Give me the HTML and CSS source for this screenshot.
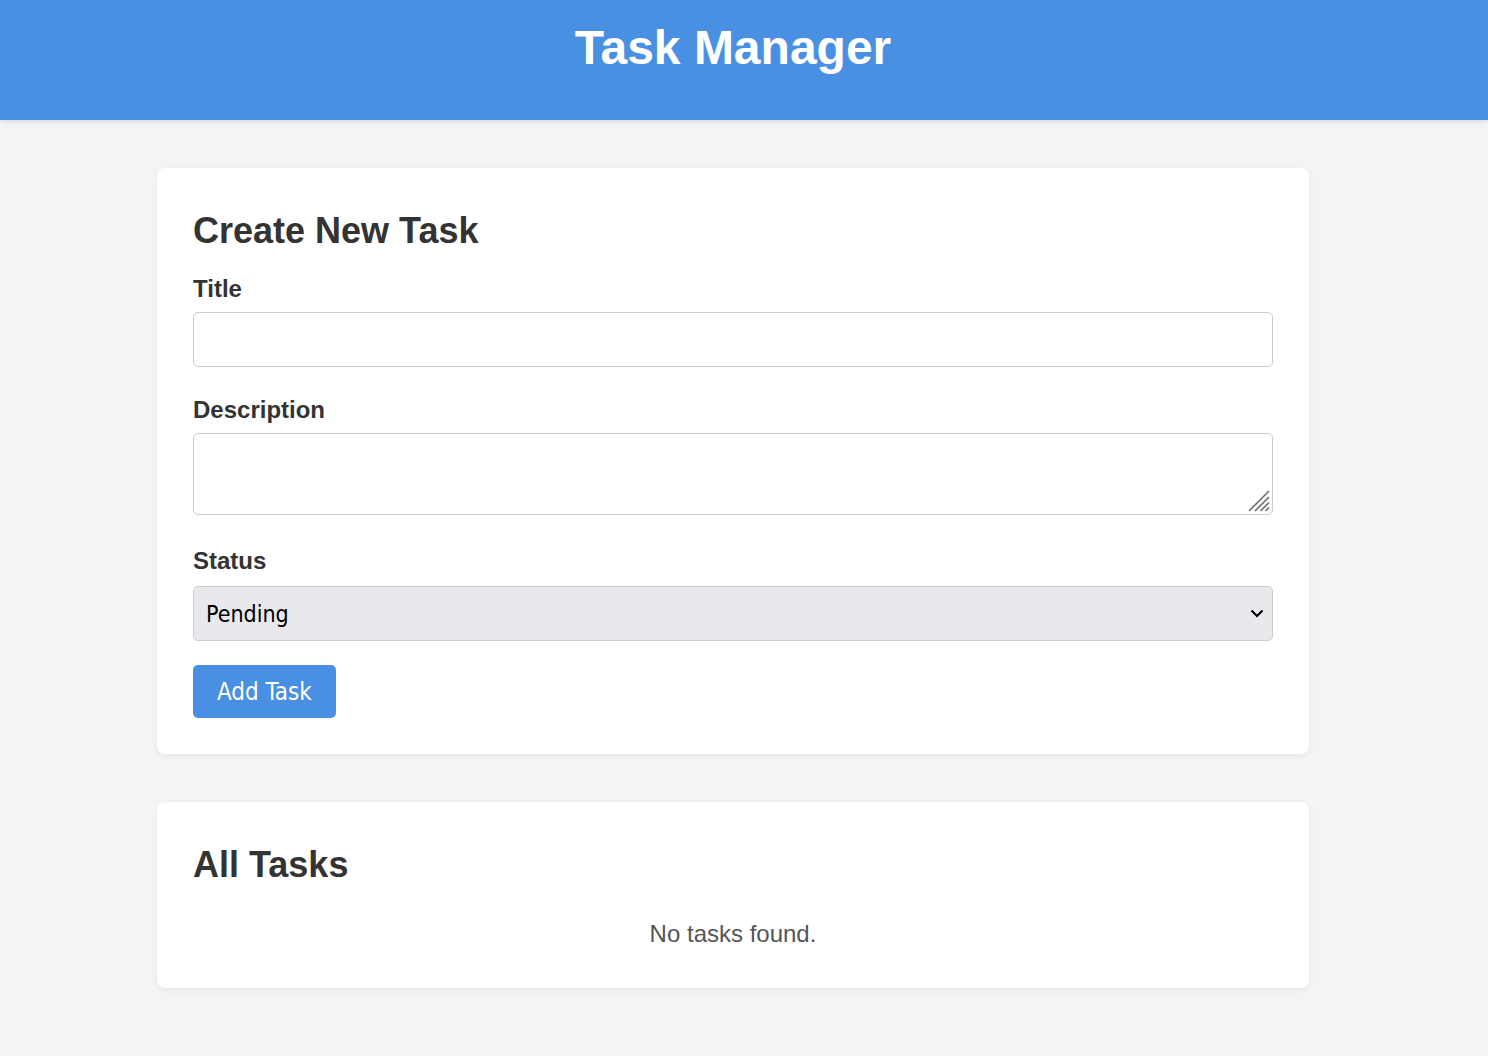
FILE: index.html
```html
<!DOCTYPE html>
<html lang="en">
<head>
<meta charset="utf-8">
<title>Task Manager</title>
<link rel="stylesheet" href="styles.css">
</head>
<body>
<header class="app-header">
  <h1 class="app-title">Task Manager</h1>
</header>
<main class="container">
  <section class="card">
    <h2 class="card-title">Create New Task</h2>
    <form class="task-form">
      <div class="form-group">
        <label class="form-label" for="title">Title</label>
        <input class="form-control" id="title" type="text">
      </div>
      <div class="form-group form-group-area">
        <label class="form-label" for="desc">Description</label>
        <div class="area-wrap">
          <textarea class="form-control form-textarea" id="desc"></textarea>
          <svg class="grip" width="22" height="22" viewBox="0 0 22 22" aria-hidden="true">
            <path d="M1 21 L21 1 M7 21 L21 7 M12.5 21 L21 12.5 M17.5 21 L21 17.5" stroke="#6e6e6e" stroke-width="1.6" fill="none"/>
          </svg>
        </div>
      </div>
      <div class="form-group form-group-last">
        <label class="form-label form-label-select" for="status">Status</label>
        <select class="form-control form-select" id="status">
          <option>Pending</option>
          <option>In Progress</option>
          <option>Completed</option>
        </select>
      </div>
      <button class="btn" type="button">Add Task</button>
    </form>
  </section>
  <section class="card">
    <h2 class="card-title">All Tasks</h2>
    <p class="empty">No tasks found.</p>
  </section>
</main>
</body>
</html>
```
FILE: styles.css
```css
* { box-sizing: border-box; }

body {
  margin: 0;
  background: #f4f4f4;
  font-family: "Liberation Sans", Arial, sans-serif;
  color: #333;
}

.app-header {
  background: #4a90e2;
  height: 120px;
  padding-top: 20px;
  padding-right: 22px;
  box-shadow: 0 2px 5px rgba(0, 0, 0, 0.1);
  text-align: center;
}

.app-title {
  margin: 0;
  color: #fff;
  font-size: 48px;
  line-height: 56px;
  font-weight: bold;
}

.container {
  width: 1152px;
  margin: 48px 0 0 157px;
  display: flex;
  flex-direction: column;
  gap: 48px;
  padding-bottom: 48px;
}

.card {
  background: #fff;
  border-radius: 8px;
  padding: 36px;
  box-shadow: 0 2px 6px rgba(0, 0, 0, 0.06);
}

.card-title {
  margin: 7px 0 0;
  font-size: 36px;
  line-height: 40px;
  font-weight: bold;
  color: #333;
}

.task-form {
  display: flex;
  flex-direction: column;
  padding-top: 25px;
}

.form-group {
  display: flex;
  flex-direction: column;
  margin-bottom: 30px;
}

.form-group-area { margin-bottom: 33px; }
.form-group-last { margin-bottom: 24px; }

.form-label {
  font-size: 24px;
  line-height: 26px;
  font-weight: bold;
  color: #333;
  margin-bottom: 10px;
}

.form-label-select { margin-bottom: 12px; }

.form-control {
  display: block;
  width: 100%;
  height: 55px;
  border: 1px solid #ccc;
  border-radius: 5px;
  background: #fff;
  font-family: "DejaVu Sans Condensed", "DejaVu Sans", sans-serif;
  font-stretch: condensed;
  font-size: 23px;
  padding: 0 12px;
  margin: 0;
  color: #000;
}

.area-wrap { position: relative; }

.form-textarea {
  height: 82px;
  resize: none;
  padding: 12px;
}

.grip {
  position: absolute;
  right: 3px;
  bottom: 3px;
  pointer-events: none;
}

.form-select {
  appearance: none;
  -webkit-appearance: none;
  background-color: #e9e9ed;
  background-image: url("data:image/svg+xml,%3Csvg xmlns='http://www.w3.org/2000/svg' width='14' height='9' viewBox='0 0 14 9'%3E%3Cpath d='M1.5 1.5 L7 7 L12.5 1.5' fill='none' stroke='%23000' stroke-width='2.2'/%3E%3C/svg%3E");
  background-repeat: no-repeat;
  background-position: right 8px center;
  background-size: 14px 9px;
}

.btn {
  align-self: flex-start;
  height: 53px;
  padding: 0 24px;
  border: none;
  border-radius: 5px;
  background: #4a90e2;
  color: #fff;
  font-family: "DejaVu Sans Condensed", "DejaVu Sans", sans-serif;
  font-stretch: condensed;
  font-size: 24px;
  cursor: pointer;
}

.empty {
  margin: 35px 0 5px;
  text-align: center;
  font-size: 24px;
  line-height: 27px;
  color: #555;
}
```
